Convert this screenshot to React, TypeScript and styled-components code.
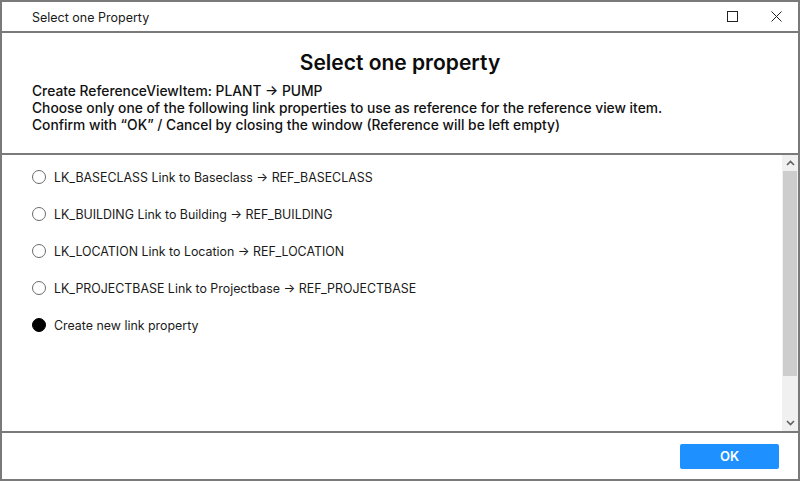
import React, { useState } from "react";
import styled, { createGlobalStyle } from "styled-components";

const Global = createGlobalStyle`
  html, body { margin: 0; padding: 0; background: #ffffff; }
  body { font-family: Inter, "Noto Sans", sans-serif; color: #111; }
  * { box-sizing: border-box; }
`;

const Window = styled.div`
  width: 800px;
  height: 481px;
  border: 2px solid #7a7a7a;
  display: flex;
  flex-direction: column;
  background: #fff;
`;

const TitleBar = styled.div`
  height: 31px;
  flex: none;
  display: flex;
  align-items: center;
  padding-left: 30px;
  border-bottom: 2px solid #7a7a7a;
  font-size: 12.5px;
  color: #1a1a1a;
`;

const TitleText = styled.div`
  flex: 1;
  padding-top: 1px;
`;

const WinButton = styled.div`
  width: 44px;
  height: 100%;
  display: flex;
  align-items: center;
  justify-content: center;
`;

const Header = styled.div`
  flex: none;
  height: 122px;
  padding: 15px 30px 0 30px;
  border-bottom: 2px solid #7a7a7a;
`;

const Heading = styled.h1`
  margin: 0 0 5px 0;
  text-align: center;
  font-size: 21px;
  font-weight: 600;
  line-height: 30px;
  color: #0c0c0c;
`;

const InfoLine = styled.div`
  font-size: 13.8px;
  font-weight: 500;
  line-height: 17px;
  color: #111;
`;

const ListArea = styled.div`
  flex: 1;
  display: flex;
  min-height: 0;
  border-bottom: 2px solid #7a7a7a;
`;

const List = styled.div`
  flex: 1;
  padding: 14px 0 0 30px;
  display: flex;
  flex-direction: column;
  gap: 21px;
`;

const Row = styled.label`
  display: flex;
  align-items: center;
  gap: 8px;
  height: 16px;
  font-size: 12.4px;
  color: #1a1a1a;
  cursor: pointer;
`;

const Radio = styled.span<{ $checked: boolean }>`
  width: 14px;
  height: 14px;
  border-radius: 50%;
  border: 1.3px solid ${(p) => (p.$checked ? "#000" : "#6b6b6b")};
  background: ${(p) => (p.$checked ? "#000" : "#fff")};
  flex: none;
`;

const Scrollbar = styled.div`
  width: 16px;
  flex: none;
  background: #f0f0f0;
  display: flex;
  flex-direction: column;
`;

const Arrow = styled.div`
  height: 16px;
  flex: none;
  display: flex;
  align-items: center;
  justify-content: center;
`;

const Thumb = styled.div`
  height: 205px;
  margin: 0 1px;
  background: #cdcdcd;
  flex: none;
`;

const Track = styled.div`
  flex: 1;
`;

const Footer = styled.div`
  height: 46px;
  flex: none;
  display: flex;
  align-items: center;
  justify-content: flex-end;
  padding-right: 19px;
`;

const OkButton = styled.button`
  width: 99px;
  height: 25px;
  border: none;
  border-radius: 2px;
  background: #1e90ff;
  color: #fff;
  font-family: Inter, "Noto Sans", sans-serif;
  font-size: 13px;
  font-weight: 600;
  cursor: pointer;
`;

const items = [
  "LK_BASECLASS Link to Baseclass \u2192 REF_BASECLASS",
  "LK_BUILDING Link to Building \u2192 REF_BUILDING",
  "LK_LOCATION Link to Location \u2192 REF_LOCATION",
  "LK_PROJECTBASE Link to Projectbase \u2192 REF_PROJECTBASE",
  "Create new link property",
];

export default function App() {
  const [selected, setSelected] = useState(4);
  return (
    <>
      <Global />
      <Window>
        <TitleBar>
          <TitleText>Select one Property</TitleText>
          <WinButton>
            <svg width="11" height="11" viewBox="0 0 11 11">
              <rect x="0.5" y="0.5" width="10" height="10" fill="none" stroke="#222" strokeWidth="1" />
            </svg>
          </WinButton>
          <WinButton>
            <svg width="11" height="11" viewBox="0 0 11 11">
              <path d="M0.5 0.5 L10.5 10.5 M10.5 0.5 L0.5 10.5" stroke="#222" strokeWidth="1" />
            </svg>
          </WinButton>
        </TitleBar>
        <Header>
          <Heading>Select one property</Heading>
          <InfoLine>Create ReferenceViewItem: PLANT {"\u2192"} PUMP</InfoLine>
          <InfoLine>
            Choose only one of the following link properties to use as reference for the reference view item.
          </InfoLine>
          <InfoLine>
            Confirm with {"\u201COK\u201D"} / Cancel by closing the window (Reference will be left empty)
          </InfoLine>
        </Header>
        <ListArea>
          <List>
            {items.map((t, i) => (
              <Row key={t} onClick={() => setSelected(i)}>
                <Radio $checked={selected === i} />
                {t}
              </Row>
            ))}
          </List>
          <Scrollbar>
            <Arrow>
              <svg width="9" height="6" viewBox="0 0 9 6">
                <path d="M1 5 L4.5 1.5 L8 5" fill="none" stroke="#606060" strokeWidth="1.6" />
              </svg>
            </Arrow>
            <Thumb />
            <Track />
            <Arrow>
              <svg width="9" height="6" viewBox="0 0 9 6">
                <path d="M1 1 L4.5 4.5 L8 1" fill="none" stroke="#606060" strokeWidth="1.6" />
              </svg>
            </Arrow>
          </Scrollbar>
        </ListArea>
        <Footer>
          <OkButton>OK</OkButton>
        </Footer>
      </Window>
    </>
  );
}
